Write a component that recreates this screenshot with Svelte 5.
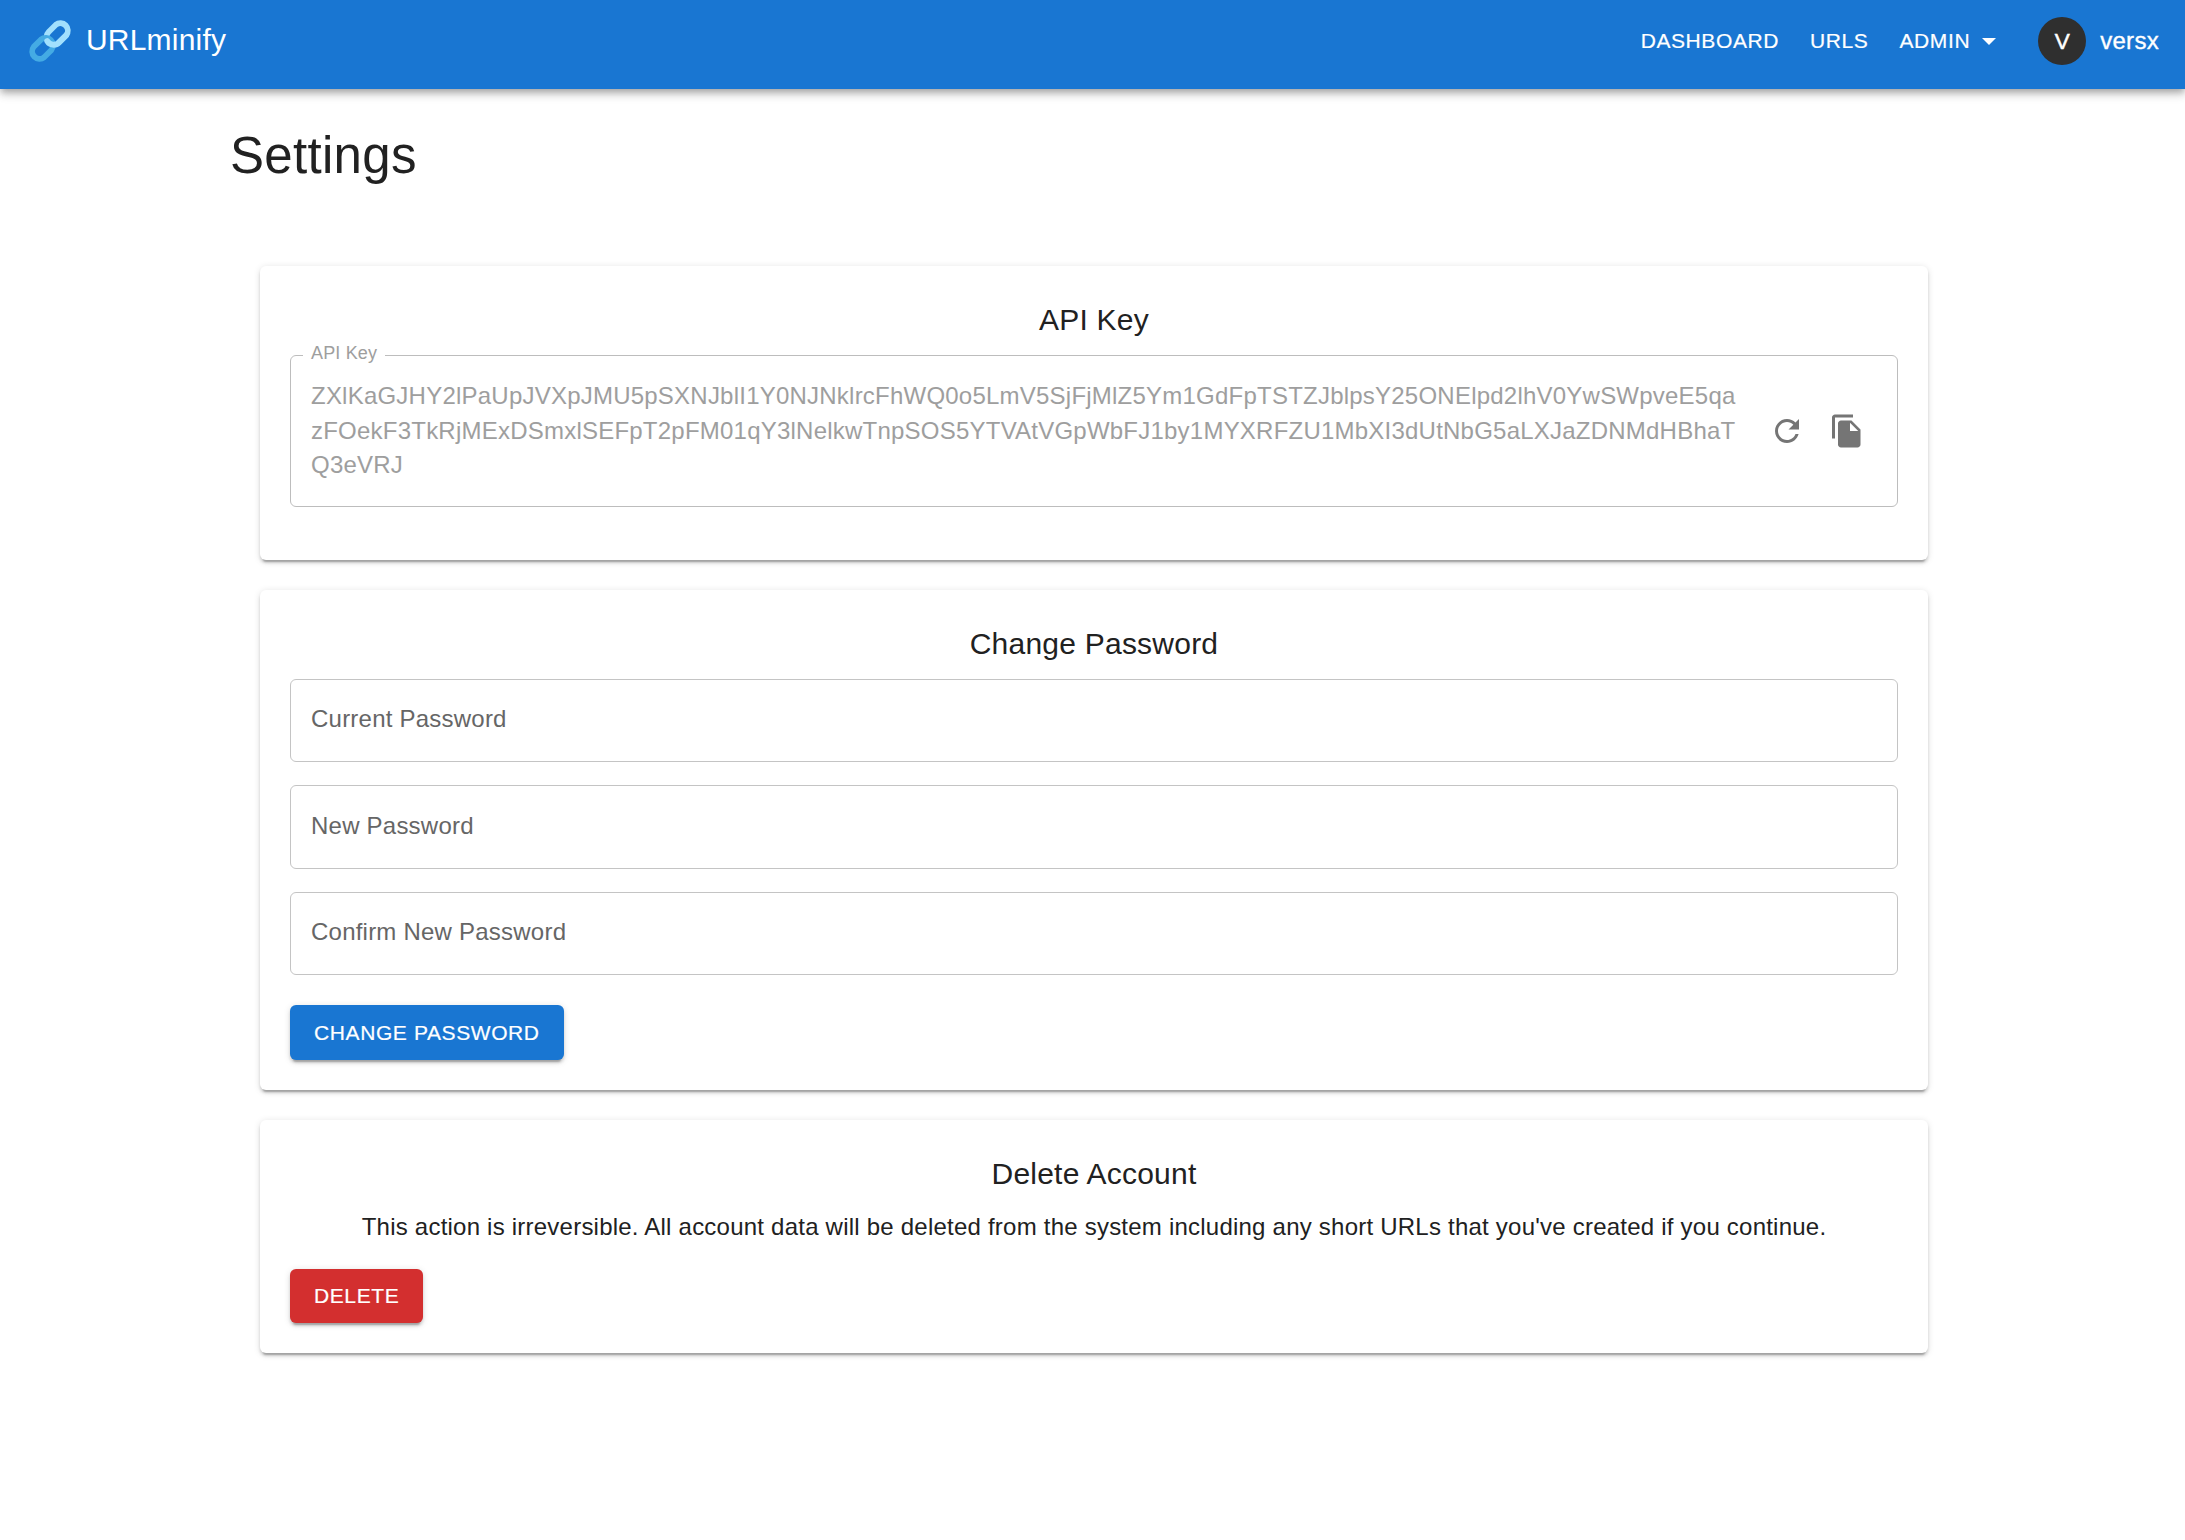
<script>
  const keyLines = [
    'ZXlKaGJHY2lPaUpJVXpJMU5pSXNJblI1Y0NJNklrcFhWQ0o5LmV5SjFjMlZ5Ym1GdFpTSTZJblpsY25ONElpd2lhV0YwSWpveE5qa',
    'zFOekF3TkRjMExDSmxlSEFpT2pFM01qY3lNelkwTnpSOS5YTVAtVGpWbFJ1by1MYXRFZU1MbXI3dUtNbG5aLXJaZDNMdHBhaT',
    'Q3eVRJ'
  ];
  const fields = ['Current Password', 'New Password', 'Confirm New Password'];
</script>

<header>
  <a class="brand" href="#home">
    <!-- two interlocked chain links -->
    <svg class="logo" viewBox="0 0 42 42" fill="none" stroke-width="5.8" stroke-linecap="round">
      <path stroke="#a2e0fd" d="M17.4 17.2A7.4 7.4 0 0 1 19.6 12L26.8 4.8A7.4 7.4 0 0 1 37.2 15.2L30 22.4" />
      <path stroke="#44abe4" d="M12 19.6A7.4 7.4 0 0 1 22.4 30L15.2 37.2A7.4 7.4 0 0 1 4.8 26.8Z" />
      <path stroke="#a2e0fd" d="M18.2 21A7.4 7.4 0 0 0 30 22.4L37.2 15.2" />
    </svg>
    <span>URLminify</span>
  </a>
  <nav>
    <a href="#dashboard">DASHBOARD</a>
    <a href="#urls">URLS</a>
    <a href="#admin">ADMIN<svg class="caret" viewBox="0 0 14 7"><path d="M0 0h14L7 7z" /></svg></a>
  </nav>
  <div class="user"><span class="avatar">V</span><span class="name">versx</span></div>
</header>

<main>
  <h1>Settings</h1>
  <section class="api">
    <h2>API Key</h2>
    <div class="keybox">
      <span class="label">API Key</span>
      <div class="key">{#each keyLines as line}<div>{line}</div>{/each}</div>
      <div class="icons">
        <svg class="icon" viewBox="0 0 24 24"><path d="M17.65 6.35C16.2 4.9 14.21 4 12 4c-4.42 0-7.99 3.58-7.99 8s3.57 8 7.99 8c3.73 0 6.84-2.55 7.73-6h-2.08c-.82 2.33-3.04 4-5.65 4-3.31 0-6-2.69-6-6s2.69-6 6-6c1.66 0 3.14.69 4.22 1.78L13 11h7V4l-2.35 2.35z" /></svg>
        <svg class="icon" viewBox="0 0 24 24"><path d="M16 1H4c-1.1 0-2 .9-2 2v14h2V3h12V1zm-1 4 6 6v10c0 1.1-.9 2-2 2H7.99C6.89 23 6 22.1 6 21l.01-14c0-1.1.89-2 1.99-2h7zm-1 7h5.5L14 6.5V12z" /></svg>
      </div>
    </div>
  </section>
  <section>
    <h2>Change Password</h2>
    <div class="fields">
      {#each fields as field}<div class="field">{field}</div>{/each}
    </div>
    <button>CHANGE PASSWORD</button>
  </section>
  <section>
    <h2>Delete Account</h2>
    <p>This action is irreversible. All account data will be deleted from the system including any short URLs that you've created if you continue.</p>
    <button class="danger">DELETE</button>
  </section>
</main>

<style>
  :global(body) { background: #fff; }
  header, main { font-family: "Liberation Sans", Arial, sans-serif; }
  header { box-sizing: border-box; height: 89px; padding: 0 26px 7px 29px; background: #1976d2; color: #fff; display: flex; align-items: center; box-shadow: 0 3px 6px -1.5px rgba(0,0,0,.2), 0 6px 7.5px rgba(0,0,0,.14), 0 1.5px 15px rgba(0,0,0,.12); }
  a { color: inherit; text-decoration: none; }
  .brand { display: flex; align-items: center; gap: 15px; font-size: 30px; letter-spacing: .2px; margin-right: auto; }
  .brand span { padding-bottom: 2px; }
  .logo { width: 42px; height: 42px; flex: none; overflow: visible; }
  nav { display: flex; gap: 31px; font-size: 21px; letter-spacing: .6px; -webkit-text-stroke: .2px #fff; }
  nav a { display: flex; align-items: center; }
  .caret { width: 14px; height: 7px; fill: #fff; margin-left: 12px; }
  .user { display: flex; align-items: center; gap: 14px; margin-left: 42px; font-size: 24px; }
  .name { letter-spacing: .3px; -webkit-text-stroke: .35px #fff; }
  .avatar { box-sizing: border-box; width: 48px; height: 48px; padding-top: 2px; border-radius: 50%; background: #2f2f2f; display: grid; place-items: center; font-size: 22.5px; -webkit-text-stroke: .5px #fff; }
  main { width: 1728px; margin: 0 auto; padding: 0 0 30px 3px; color: #212121; }
  h1 { margin: 0; padding-top: 35px; height: 142px; font-size: 51px; line-height: 63px; font-weight: 400; letter-spacing: .3px; }
  section { box-sizing: border-box; width: 1668px; margin: 0 auto 30px; padding: 30px; border-radius: 6px; background: #fff; box-shadow: 0 4.5px 1.5px -3px rgba(0,0,0,.2), 0 3px 3px rgba(0,0,0,.14), 0 1.5px 7.5px rgba(0,0,0,.12); }
  h2 { margin: 0 0 12px; font-size: 30px; line-height: 47px; font-weight: 400; text-align: center; letter-spacing: .225px; }
  .api { height: 294px; }
  .keybox { position: relative; box-sizing: border-box; height: 152px; padding: 0 32px 0 20px; border: 1px solid #bdbdbd; border-radius: 6px; display: flex; align-items: center; justify-content: space-between; color: #9e9e9e; }
  .label { position: absolute; left: 12px; top: -13px; padding: 0 8px; background: #fff; font-size: 18px; line-height: 21px; letter-spacing: .17px; }
  .key { font-size: 24px; line-height: 34.5px; letter-spacing: .225px; white-space: nowrap; }
  .icons { display: flex; gap: 24px; }
  .icon { width: 36px; height: 36px; fill: #757575; }
  .fields { display: grid; gap: 23px; }
  .field { box-sizing: border-box; height: 83px; padding: 21.5px 20px 0; border: 1px solid #c4c4c4; border-radius: 6px; color: #666; font-size: 24px; line-height: 34.5px; letter-spacing: .225px; }
  .field:nth-child(2) { height: 84px; padding-top: 22.5px; }
  button { display: block; height: 55px; margin: 30px 0 0; padding: 0 24px 1px; border: 0; border-radius: 6px; background: #1976d2; color: #fff; font: 21px/53px "Liberation Sans", Arial, sans-serif; letter-spacing: .6px; -webkit-text-stroke: .2px #fff; box-shadow: 0 4.5px 1.5px -3px rgba(0,0,0,.2), 0 3px 3px rgba(0,0,0,.14), 0 1.5px 7.5px rgba(0,0,0,.12); }
  .danger { height: 54px; margin-top: 24px; background: #d32f2f; line-height: 52px; }
  p { margin: 0; font-size: 24px; line-height: 36px; letter-spacing: .225px; text-align: center; }
</style>
